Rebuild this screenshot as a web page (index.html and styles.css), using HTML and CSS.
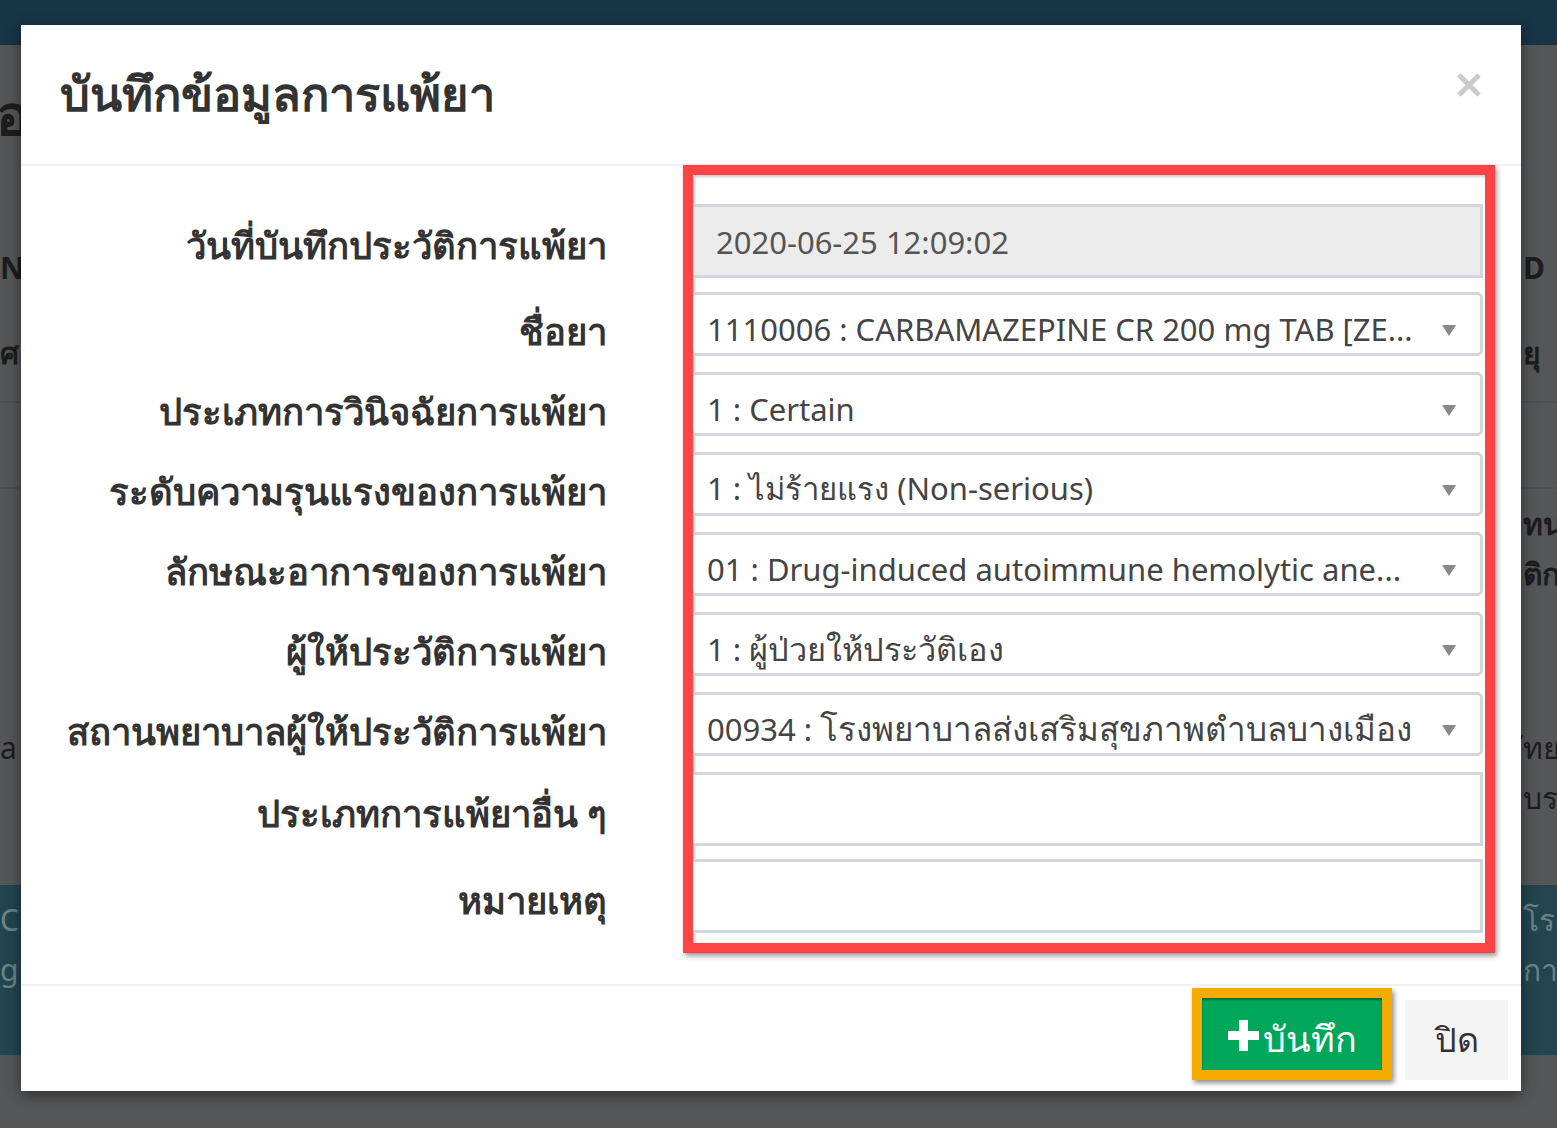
FILE: index.html
```html
<!DOCTYPE html>
<html lang="th">
<head>
<meta charset="utf-8">
<title>บันทึกข้อมูลการแพ้ยา</title>
<link rel="stylesheet" href="styles.css">
</head>
<body>
<div class="page">
  <header class="topbar"></header>
  <div class="bg-content">
    <div class="bg-row row-a"><span class="bg-l big">อ</span><span class="bg-r"></span></div>
    <div class="bg-row row-b"><span class="bg-l bold">N</span><span class="bg-r bold">D</span></div>
    <div class="bg-row row-c"><span class="bg-l bold">ศ</span><span class="bg-r bold">ยุ</span></div>
    <div class="bg-row row-band"></div>
    <div class="bg-row row-d"><span class="bg-l"></span><span class="bg-r bold two">ทน<br>ติก</span></div>
    <div class="bg-row row-e"><span class="bg-l reg two">a</span><span class="bg-r reg two">ัทย<br>บร</span></div>
    <div class="bg-row row-teal"><span class="bg-l light two">C<br>g</span><span class="bg-r light two">โรง<br>กา</span></div>
  </div>
</div>

<div class="backdrop">
  <div class="modal">
    <div class="modal-header">
      <h4 class="modal-title">บันทึกข้อมูลการแพ้ยา</h4>
      <button class="close" type="button" aria-label="close">
        <svg width="24" height="24" viewBox="0 0 24 24"><path d="M2 2 L22 22 M22 2 L2 22" stroke="#cbcbcb" stroke-width="5"/></svg>
      </button>
    </div>
    <div class="modal-body">
      <div class="labels">
        <div class="lbl h-input">วันที่บันทึกประวัติการแพ้ยา</div>
        <div class="lbl h-sel gap-14">ชื่อยา</div>
        <div class="lbl h-sel gap-16">ประเภทการวินิจฉัยการแพ้ยา</div>
        <div class="lbl h-sel gap-16">ระดับความรุนแรงของการแพ้ยา</div>
        <div class="lbl h-sel gap-16">ลักษณะอาการของการแพ้ยา</div>
        <div class="lbl h-sel gap-16">ผู้ให้ประวัติการแพ้ยา</div>
        <div class="lbl h-sel gap-16">สถานพยาบาลผู้ให้ประวัติการแพ้ยา</div>
        <div class="lbl h-input gap-16">ประเภทการแพ้ยาอื่น ๆ</div>
        <div class="lbl h-input gap-13">หมายเหตุ</div>
      </div>
      <div class="fields">
        <div class="field input readonly">2020-06-25 12:09:02</div>
        <div class="field select gap-14"><span class="sel-text">1110006 : CARBAMAZEPINE CR 200 mg TAB [ZE...</span><span class="caret"></span></div>
        <div class="field select gap-16"><span class="sel-text">1 : Certain</span><span class="caret"></span></div>
        <div class="field select gap-16"><span class="sel-text">1 : ไม่ร้ายแรง (Non-serious)</span><span class="caret"></span></div>
        <div class="field select gap-16"><span class="sel-text">01 : Drug-induced autoimmune hemolytic ane...</span><span class="caret"></span></div>
        <div class="field select gap-16"><span class="sel-text">1 : <span class="th">ผู้ป่วยให้ประวัติเอง</span></span><span class="caret"></span></div>
        <div class="field select gap-16"><span class="sel-text">00934 : <span class="th th-wide">โรงพยาบาลส่งเสริมสุขภาพตำบลบางเมือง</span></span><span class="caret"></span></div>
        <div class="field input gap-16"></div>
        <div class="field input gap-13"></div>
      </div>
    </div>
    <div class="modal-footer">
      <div class="highlight">
        <button class="btn-save" type="button">
          <svg class="plus" width="31" height="31" viewBox="0 0 31 31"><path d="M11 0 H20 V11 H31 V20 H20 V31 H11 V20 H0 V11 H11 Z" fill="#fff"/></svg>
          <span>บันทึก</span>
        </button>
      </div>
      <button class="btn-close" type="button">ปิด</button>
    </div>
  </div>
</div>
</body>
</html>
```
FILE: styles.css
```css
* { box-sizing: border-box; }
html, body { margin: 0; padding: 0; }
body {
  width: 1557px;
  height: 1128px;
  overflow: hidden;
  position: relative;
  background: #555658;
  font-family: "Noto Sans", "Open Sans", sans-serif;
  color: #333;
}

/* background page (dimmed) */
.topbar { height: 45px; background: #183447; }
.bg-content { display: flex; flex-direction: column; }
.bg-row {
  display: grid;
  grid-template-columns: 21px 1500px 36px;
  align-items: center;
  color: #1c1c1c;
}
.bg-l { grid-column: 1; white-space: nowrap; }
.bg-r { grid-column: 3; white-space: nowrap; padding-left: 2px; }
.bold { font-weight: 700; font-size: 30px; }
.big { font-weight: 700; font-size: 56px; margin-left: -4px; }
.reg { font-size: 30px; }
.two { line-height: 50px; }
.light { color: #6d8289; font-size: 30px; }
.row-a { height: 140px; }
.row-b { height: 75px; margin-top: 45px; }
.row-c { height: 96px; }
.row-band { height: 88px; border-top: 2px solid #4d4e50; border-bottom: 2px solid #4d4e50; }
.row-d { height: 120px; }
.row-e { height: 150px; margin-top: 89px; padding-top: 25px; align-items: start; }
.row-teal { height: 170px; margin-top: 37px; padding-bottom: 50px; background: #22454f; }

/* modal */
.backdrop { position: absolute; inset: 0; }
.modal {
  margin: 25px 0 0 21px;
  width: 1500px;
  height: 1066px;
  background: #fff;
  display: flex;
  flex-direction: column;
  box-shadow: 0 4px 14px rgba(0, 0, 0, .45);
}
.modal-header {
  height: 141px;
  border-bottom: 2px solid #f2f2f2;
  display: flex;
  align-items: center;
  justify-content: space-between;
  padding: 0 40px 0 39px;
}
.modal-title {
  margin: 0;
  font-size: 47px;
  font-weight: 700;
  color: #333;
}
.close {
  border: 0;
  background: none;
  padding: 0;
  width: 24px;
  height: 24px;
  margin-bottom: 20px;
  display: flex;
}

.modal-body {
  flex: 1;
  display: flex;
  padding: 0 26px 0 0;
}
.labels {
  width: 586px;
  margin-right: 76px;
  padding-top: 38px;
  display: flex;
  flex-direction: column;
}
.lbl {
  display: flex;
  align-items: center;
  justify-content: flex-end;
  padding-top: 16px;
  font-size: 36.5px;
  font-weight: 700;
  color: #333;
  white-space: nowrap;
}
.lbl.h-input { padding-top: 10px; }
.h-input { height: 74px; }
.h-sel { height: 64px; }
.gap-14 { margin-top: 14px; }
.gap-16 { margin-top: 16px; }
.gap-13 { margin-top: 13px; }

.fields {
  width: 812px;
  height: 788px;
  margin-top: -1px;
  border: 10px solid #fe4346;
  padding: 29px 2px 10px 0;
  overflow: hidden;
  display: flex;
  flex-direction: column;
  box-shadow: 2px 3px 5px rgba(0, 0, 0, .4), inset 2px 2px 3px rgba(0, 0, 0, .2);
}
.field {
  margin-left: -3px;
  border: 3px solid #d2d6de;
  background: #fff;
  display: flex;
  align-items: center;
  font-size: 31px;
  color: #444;
  white-space: nowrap;
  flex: none;
}
.th { font-size: 32.5px; }
.th-wide { font-size: 33.2px; }
.input { height: 74px; }
.readonly { background: #ececec; padding-left: 23px; padding-top: 2px; color: #555; }
.select {
  height: 64px;
  border-radius: 6px;
  padding: 10px 24px 0 14px;
  justify-content: space-between;
}
.caret {
  width: 0;
  height: 0;
  border-left: 7px solid transparent;
  border-right: 7px solid transparent;
  border-top: 11px solid #888;
  margin-top: 2px;
}

.modal-footer {
  height: 107px;
  border-top: 2px solid #f2f2f2;
  display: flex;
  justify-content: flex-end;
  align-items: flex-end;
  padding: 0 13px 11px 0;
  gap: 13px;
}
.highlight {
  border: 10px solid #f6ab00;
  box-shadow: 2px 3px 5px rgba(0, 0, 0, .45);
  display: flex;
}
.btn-save {
  width: 180px;
  height: 72px;
  border: 0;
  background: #00a65a;
  box-shadow: inset 0 2px 2px rgba(0, 0, 0, .35);
  color: #fff;
  display: flex;
  align-items: center;
  justify-content: center;
  gap: 4px;
  font-family: inherit;
  font-size: 36px;
  padding: 10px 0 0 0;
}
.plus { flex: none; margin-top: -8px; }
.btn-close {
  width: 103px;
  height: 80px;
  border: 0;
  background: #f4f4f4;
  color: #333;
  font-family: inherit;
  font-size: 34px;
  display: flex;
  align-items: center;
  justify-content: center;
  padding: 0;
}
```
